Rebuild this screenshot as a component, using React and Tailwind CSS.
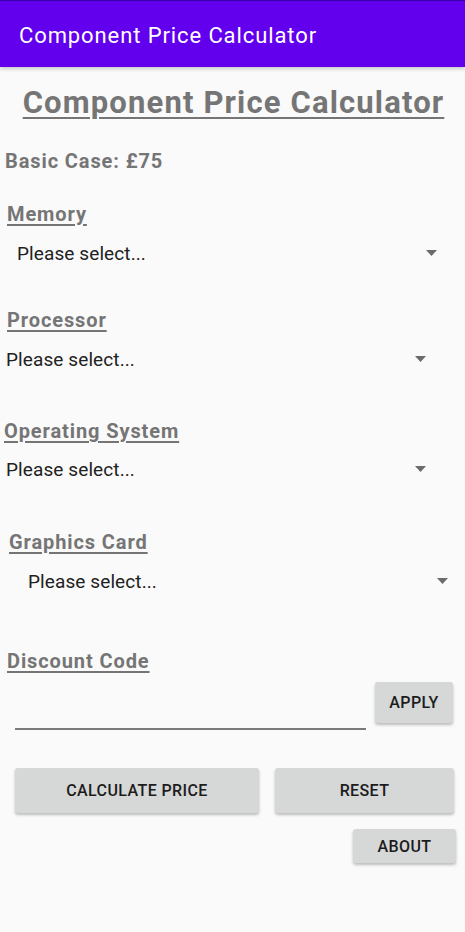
import React from "react";

function Arrow() {
  return (
    <svg width="11" height="6" viewBox="0 0 11 6" className="shrink-0">
      <path d="M0 0 H11 L5.5 6 Z" fill="#6b6b6b" />
    </svg>
  );
}

function Label({ children, pl, mt }) {
  return (
    <div className={`h-[28px] flex items-center ${pl} ${mt}`}>
      <span className="text-[20px] font-bold text-[#757575] tracking-[0.9px] underline underline-offset-[3px] decoration-[1.5px] leading-none">
        {children}
      </span>
    </div>
  );
}

function Spinner({ textPl, arrowX, mt }) {
  return (
    <div className={`h-[40px] flex items-center relative ${mt}`}>
      <span className={`text-[19px] text-[#212121] leading-none tracking-[0.1px] ${textPl}`}>Please select...</span>
      <div className={`absolute top-[17px] ${arrowX}`}>
        <Arrow />
      </div>
    </div>
  );
}

function Btn({ children, cls }) {
  return (
    <div
      className={`bg-[#d6d7d7] rounded-[3px] flex items-center justify-center text-[16px] font-medium text-[#1c1c1c] tracking-[0.4px] pt-[1px] shadow-[0_2px_3px_rgba(0,0,0,0.25)] ${cls}`}
    >
      {children}
    </div>
  );
}

export default function App() {
  return (
    <div className="w-[465px] h-[932px] bg-[#fafafa] font-['Roboto',sans-serif] overflow-hidden">
      <div className="h-[67px] bg-[#6200ee] border-t border-[#3a00a8] flex items-center pl-[19px] pt-[3px] shadow-[0_2px_4px_rgba(0,0,0,0.2)] relative z-10">
        <span className="text-white text-[22px] tracking-[0.9px] leading-none">Component Price Calculator</span>
      </div>

      <div className="h-[70px] flex items-center justify-center">
        <span className="text-[31px] font-bold text-[#757575] tracking-[1.15px] underline underline-offset-[4px] decoration-[2px] leading-none pl-[2px]">
          Component Price Calculator
        </span>
      </div>

      <div className="h-[48px] flex items-center pl-[5px]">
        <span className="text-[20px] font-bold text-[#757575] tracking-[0.9px] leading-none">Basic Case: £75</span>
      </div>

      <Label pl="pl-[7px]" mt="mt-[15px]">Memory</Label>
      <Spinner textPl="pl-[17px]" arrowX="left-[426px]" mt="mt-[5px]" />

      <Label pl="pl-[7px]" mt="mt-[33px]">Processor</Label>
      <Spinner textPl="pl-[6px]" arrowX="left-[415px]" mt="mt-[5px]" />

      <Label pl="pl-[4px]" mt="mt-[38px]">Operating System</Label>
      <Spinner textPl="pl-[6px]" arrowX="left-[415px]" mt="mt-[4px]" />

      <Label pl="pl-[9px]" mt="mt-[39px]">Graphics Card</Label>
      <Spinner textPl="pl-[28px]" arrowX="left-[437px]" mt="mt-[5px]" />

      <Label pl="pl-[7px]" mt="mt-[46px]">Discount Code</Label>

      <div className="mt-[7px] flex items-start pl-[15px]">
        <div className="w-[351px] h-[48px] border-b-2 border-[#7a7a7a]" />
        <Btn cls="ml-[9px] w-[78px] h-[41px]">APPLY</Btn>
      </div>

      <div className="mt-[38px] flex pl-[15px]">
        <Btn cls="w-[244px] h-[45px]">CALCULATE PRICE</Btn>
        <Btn cls="ml-[16px] w-[179px] h-[45px]">RESET</Btn>
      </div>

      <div className="mt-[16px] flex pl-[353px]">
        <Btn cls="w-[103px] h-[34px]">ABOUT</Btn>
      </div>
    </div>
  );
}
